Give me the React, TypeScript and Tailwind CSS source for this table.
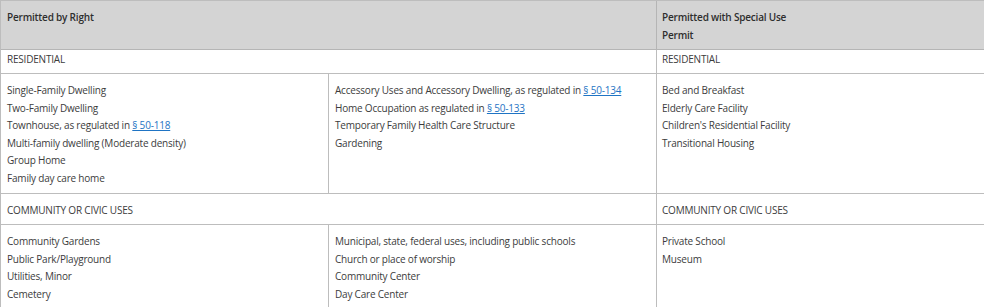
import React from 'react';

type Item = { text: string; link?: string };

const RESIDENTIAL: Item[][] = [
  [
    { text: 'Single-Family Dwelling' },
    { text: 'Two-Family Dwelling' },
    { text: 'Townhouse, as regulated in ', link: '§ 50-118' },
    { text: 'Multi-family dwelling (Moderate density)' },
    { text: 'Group Home' },
    { text: 'Family day care home' },
  ],
  [
    { text: 'Accessory Uses and Accessory Dwelling, as regulated in ', link: '§ 50-134' },
    { text: 'Home Occupation as regulated in ', link: '§ 50-133' },
    { text: 'Temporary Family Health Care Structure' },
    { text: 'Gardening' },
  ],
  [
    { text: 'Bed and Breakfast' },
    { text: 'Elderly Care Facility' },
    { text: "Children's Residential Facility" },
    { text: 'Transitional Housing' },
  ],
];

const CIVIC: Item[][] = [
  [
    { text: 'Community Gardens' },
    { text: 'Public Park/Playground' },
    { text: 'Utilities, Minor' },
    { text: 'Cemetery' },
  ],
  [
    { text: 'Municipal, state, federal uses, including public schools' },
    { text: 'Church or place of worship' },
    { text: 'Community Center' },
    { text: 'Day Care Center' },
  ],
  [{ text: 'Private School' }, { text: 'Museum' }],
];

const PAD = ['pl-[6px]', 'pl-[6px]', 'pl-[5px]'];

function ItemList({ items, col }: { items: Item[]; col: number }) {
  return (
    <div className={`border-r border-b border-[#bdbdbd] ${PAD[col]} pr-[6px] pt-[8px] pb-[6px]`}>
      {items.map(it => (
        <div key={it.text} className="leading-[17.5px] whitespace-nowrap">
          {it.text}
          {it.link && <a href="#" className="text-[#1f74c4] underline">{it.link}</a>}
        </div>
      ))}
    </div>
  );
}

export default function App() {
  return (
    <div className="w-[984px] h-[307px] overflow-hidden bg-white" style={{ fontFamily: '"Open Sans", sans-serif' }}>
      <div className="w-[1000px] border-l border-t border-[#bdbdbd] text-[10px] tracking-[-0.2px] text-[#3c3c3c] grid grid-cols-[328px_328px_1fr]">
        {/* header */}
        <div className="col-span-2 bg-[#d4d4d4] border-r border-b border-[#b5b5b5] pl-[6px] pt-[8px] h-[49px] font-semibold text-[#2e2e2e] leading-[17.5px]">
          Permitted by Right
        </div>
        <div className="bg-[#d4d4d4] border-r border-b border-[#b5b5b5] pl-[5px] pt-[8px] h-[49px] font-semibold text-[#2e2e2e] leading-[17.5px]">
          <div className="max-w-[130px]">Permitted with Special Use Permit</div>
        </div>

        {/* residential */}
        <div className="col-span-2 border-r border-b border-[#bdbdbd] pl-[6px] pt-px h-[24px] leading-[17.5px]">RESIDENTIAL</div>
        <div className="border-r border-b border-[#bdbdbd] pl-[5px] pt-px h-[24px] leading-[17.5px]">RESIDENTIAL</div>
        {RESIDENTIAL.map((col, i) => (
          <ItemList key={i} items={col} col={i} />
        ))}

        {/* community / civic */}
        <div className="col-span-2 border-r border-b border-[#bdbdbd] pl-[6px] pt-[8px] h-[31px] leading-[17.5px]">
          COMMUNITY OR CIVIC USES
        </div>
        <div className="border-r border-b border-[#bdbdbd] pl-[5px] pt-[8px] h-[31px] leading-[17.5px]">
          COMMUNITY OR CIVIC USES
        </div>
        {CIVIC.map((col, i) => (
          <ItemList key={i} items={col} col={i} />
        ))}
      </div>
    </div>
  );
}
